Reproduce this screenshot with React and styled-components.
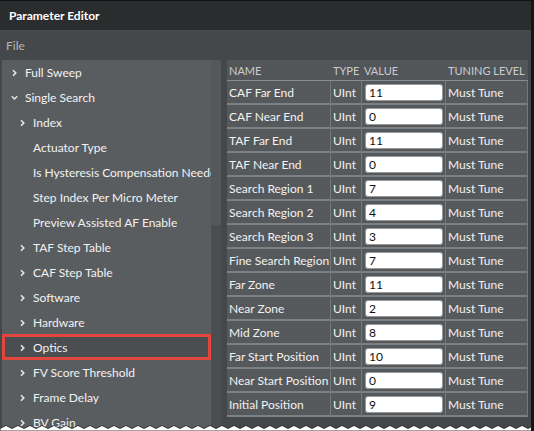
import React from "react";
import styled, { createGlobalStyle } from "styled-components";

const Global = createGlobalStyle`
  html, body { margin: 0; padding: 0; background: #ffffff; }
  body { font-family: Lato, "Noto Sans", sans-serif; font-size: 12px; }
`;

const tree = [
  { label: "Full Sweep", level: 0, arrow: "right" },
  { label: "Single Search", level: 0, arrow: "down" },
  { label: "Index", level: 1, arrow: "right" },
  { label: "Actuator Type", level: 1 },
  { label: "Is Hysteresis Compensation Needed", level: 1 },
  { label: "Step Index Per Micro Meter", level: 1 },
  { label: "Preview Assisted AF Enable", level: 1 },
  { label: "TAF Step Table", level: 1, arrow: "right" },
  { label: "CAF Step Table", level: 1, arrow: "right" },
  { label: "Software", level: 1, arrow: "right" },
  { label: "Hardware", level: 1, arrow: "right" },
  { label: "Optics", level: 1, arrow: "right", selected: true },
  { label: "FV Score Threshold", level: 1, arrow: "right" },
  { label: "Frame Delay", level: 1, arrow: "right" },
  { label: "BV Gain", level: 1, arrow: "right" },
];

const params = [
  ["CAF Far End", "11"],
  ["CAF Near End", "0"],
  ["TAF Far End", "11"],
  ["TAF Near End", "0"],
  ["Search Region 1", "7"],
  ["Search Region 2", "4"],
  ["Search Region 3", "3"],
  ["Fine Search Region", "7"],
  ["Far Zone", "11"],
  ["Near Zone", "2"],
  ["Mid Zone", "8"],
  ["Far Start Position", "10"],
  ["Near Start Position", "0"],
  ["Initial Position", "9"],
];

const Chevron = ({ dir }) => (
  <svg width="7" height="8" viewBox="0 0 7 8">
    {dir === "down" ? (
      <path d="M0.8 2.2 L3.5 4.9 L6.2 2.2" fill="none" stroke="#e8e8e8" strokeWidth="1.4" />
    ) : (
      <path d="M2 1.2 L4.8 4 L2 6.8" fill="none" stroke="#e8e8e8" strokeWidth="1.6" />
    )}
  </svg>
);

export default function App() {
  return (
    <>
      <Global />
      <Window>
        <TitleBar>Parameter Editor</TitleBar>
        <MenuBar>File</MenuBar>
        <Body>
          <TreePanel>
            {tree.map((t) => (
              <TreeRow key={t.label} level={t.level} selected={t.selected}>
                <ArrowSlot>{t.arrow && <Chevron dir={t.arrow} />}</ArrowSlot>
                <TreeLabel>{t.label}</TreeLabel>
                {t.selected && <Highlight />}
              </TreeRow>
            ))}
          </TreePanel>
          <ScrollTrack>
            <Thumb />
          </ScrollTrack>
          <TableArea>
            <Table>
              <HeadRow>
                <HeadCell>NAME</HeadCell>
                <HeadCell>TYPE</HeadCell>
                <HeadCell>VALUE</HeadCell>
                <HeadCell>TUNING LEVEL</HeadCell>
              </HeadRow>
              {params.map(([name, value]) => (
                <Row key={name}>
                  <Cell>{name}</Cell>
                  <Cell>UInt</Cell>
                  <Cell>
                    <ValueInput defaultValue={value} />
                  </Cell>
                  <Cell>Must Tune</Cell>
                </Row>
              ))}
            </Table>
          </TableArea>
        </Body>
        <TornEdge viewBox="0 0 534 8" preserveAspectRatio="none">
          <polygon
            points={
              "0,8 " +
              Array.from({ length: 90 }, (_, i) => `${i * 6},${i % 2 ? 2.5 : 5.5}`).join(" ") +
              " 534,8"
            }
            fill="#ffffff"
            stroke="#1a1a1a"
            strokeWidth="0.8"
          />
        </TornEdge>
      </Window>
    </>
  );
}

const Window = styled.div`
  position: relative;
  width: 531px;
  height: 430px;
  border-top: 1px solid #111;
  border-right: 3px solid #151515;
  background: #45484a;
  overflow: hidden;
  color: #f2f2f2;
`;

const TitleBar = styled.div`
  height: 29px;
  display: flex;
  align-items: center;
  padding-left: 9px;
  background: #2b2c2d;
  font-weight: 700;
  color: #ffffff;
`;

const MenuBar = styled.div`
  height: 30px;
  display: flex;
  align-items: center;
  padding-left: 6px;
  color: #b4b6b8;
`;

const Body = styled.div`
  display: flex;
  height: 371px;
  padding-left: 2px;
`;

const TreePanel = styled.div`
  position: relative;
  width: 209px;
  flex-shrink: 0;
  background: #5a5d60;
  overflow: hidden;
`;

const TreeRow = styled.div`
  position: relative;
  height: 25px;
  display: flex;
  align-items: center;
  padding-left: ${({ level }) => 9 + level * 8}px;
  background: ${({ selected }) => (selected ? "#4b4e51" : "transparent")};
  white-space: nowrap;
`;

const ArrowSlot = styled.span`
  width: 14px;
  flex-shrink: 0;
  display: flex;
  align-items: center;
`;

const TreeLabel = styled.span`
  flex-shrink: 0;
  color: #f2f2f2;
`;

const Highlight = styled.div`
  position: absolute;
  left: 0;
  right: 0;
  top: -1px;
  bottom: 0;
  border: 3px solid #e2453c;
  pointer-events: none;
`;

const ScrollTrack = styled.div`
  width: 10px;
  flex-shrink: 0;
  background: #4b4e51;
  margin-right: 6px;
`;

const Thumb = styled.div`
  height: 165px;
  background: #55585b;
`;

const TableArea = styled.div`
  width: 301px;
  flex-shrink: 0;
`;

const Table = styled.div`
  display: grid;
  grid-template-columns: 104px 31px 84px 82px;
`;

const HeadRow = styled.div`
  display: contents;
`;

const HeadCell = styled.div`
  height: 20px;
  display: flex;
  align-items: center;
  padding-left: 2px;
  background: #535659;
  color: #c9cdd1;
  font-size: 11px;
  border-bottom: 1px solid #8a8d90;
  white-space: nowrap;
  overflow: hidden;
`;

const Row = styled.div`
  display: contents;
`;

const Cell = styled.div`
  height: 22px;
  display: flex;
  align-items: center;
  padding-left: 2px;
  background: #56595c;
  border-bottom: 2px solid #7d8083;
  border-right: 1px solid #76797c;
  white-space: nowrap;
  overflow: hidden;
`;

const ValueInput = styled.input`
  width: 78px;
  height: 17px;
  box-sizing: border-box;
  margin-left: 1px;
  padding: 0 3px;
  border: 1px solid #9a9a9a;
  border-radius: 3px;
  background: #ffffff;
  color: #111;
  font: inherit;
`;

const TornEdge = styled.svg`
  position: absolute;
  left: 0;
  bottom: 0;
  width: 534px;
  height: 8px;
`;
